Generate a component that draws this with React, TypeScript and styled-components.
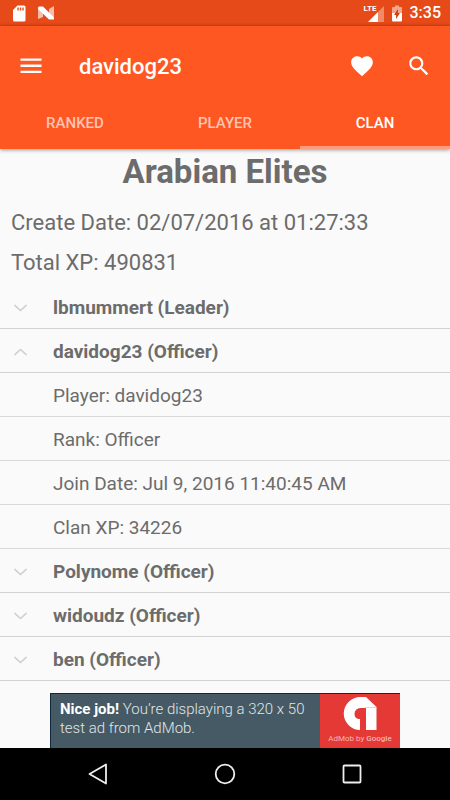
import React, { useState } from "react";
import styled, { createGlobalStyle } from "styled-components";

const GlobalStyle = createGlobalStyle`
  *, *::before, *::after { box-sizing: border-box; }
  body { margin: 0; background: #fafafa; font-family: Roboto, "Noto Sans", sans-serif; }
  button { font-family: inherit; border: 0; padding: 0; background: none; cursor: pointer; }
  h1, h2, p, ul { margin: 0; padding: 0; }
  svg { display: block; flex: none; }
`;

const Screen = styled.div`
  display: flex;
  flex-direction: column;
  height: 100vh;
  color: #6c6c6c;
`;

const StatusBar = styled.div`
  display: flex;
  align-items: center;
  justify-content: space-between;
  flex: none;
  height: 26px;
  padding: 0 9px 0 12px;
  background: linear-gradient(#e64a19 23px, #d84617);
  color: #fff;
`;

const StatusGroup = styled.div<{ $gap: number }>`
  display: flex;
  align-items: center;
  gap: ${(p) => p.$gap}px;
`;

const Network = styled.div`
  position: relative;
  padding-left: 4px;
`;

const NetworkType = styled.span`
  position: absolute;
  left: 0;
  top: 0;
  font-size: 8px;
  line-height: 8px;
  font-weight: 700;
`;

const Clock = styled.time`
  font-size: 16px;
  line-height: 26px;
  font-weight: 500;
`;

const Header = styled.header`
  position: relative;
  flex: none;
  background: #ff5722;
  color: #fff;
  box-shadow: 0 1px 4px rgba(0, 0, 0, 0.4);
`;

const Toolbar = styled.div`
  display: flex;
  align-items: center;
  height: 79px;
  padding: 0 18px;
`;

const IconButton = styled.button`
  display: grid;
  place-items: center;
  width: 26px;
  height: 40px;
  color: #fff;
`;

const ToolbarTitle = styled.h1`
  flex: 1;
  padding: 2px 0 0 35px;
  font-size: 22px;
  line-height: 28px;
  font-weight: 500;
`;

const Actions = styled.div`
  display: flex;
  gap: 31px;
`;

const Tabs = styled.div`
  display: grid;
  grid-template-columns: repeat(3, 1fr);
`;

const Tab = styled.button<{ $active: boolean }>`
  height: 44px;
  padding-bottom: 5px;
  border-bottom: 3px solid ${(p) => (p.$active ? "#ff9c7d" : "transparent")};
  color: ${(p) => (p.$active ? "#fff" : "#ffc4b2")};
  font-size: 15px;
  line-height: 20px;
  font-weight: 500;
`;

const Content = styled.main`
  flex: 1;
  min-height: 0;
  overflow: hidden;
`;

const ClanName = styled.h2`
  padding-top: 3px;
  text-align: center;
  font-size: 33px;
  line-height: 40px;
  font-weight: 700;
`;

const Facts = styled.div`
  padding: 11px 0 2px;
`;

const Fact = styled.p`
  padding: 0 11px;
  font-size: 22px;
  line-height: 40px;
`;

const List = styled.ul`
  list-style: none;
`;

const MemberRow = styled.button`
  display: flex;
  align-items: center;
  width: 100%;
  height: 44px;
  padding: 2px 0 0 14px;
  gap: 26px;
  border-bottom: 1px solid #d2d2d2;
  color: #6c6c6c;
  font-size: 19px;
  line-height: 24px;
  font-weight: 700;
  text-align: left;
`;

const DetailRow = styled.li`
  height: 44px;
  padding: 11px 0 0 53px;
  border-bottom: 1px solid #d9d9d9;
  font-size: 19px;
  line-height: 24px;
`;

const AdSlot = styled.aside`
  display: flex;
  justify-content: center;
  flex: none;
  padding: 0 50px;
`;

const Ad = styled.a`
  display: flex;
  width: 100%;
  max-width: 350px;
  height: 55px;
  border: 1px solid #10283a;
  border-width: 1px 0 0 1px;
  background: #455a64;
  color: #e0e6e9;
  text-decoration: none;
`;

const AdText = styled.p`
  flex: 1;
  padding: 6px 0 0 9px;
  font-size: 15px;
  line-height: 19px;
  font-weight: 300;
  strong { color: #fff; font-weight: 700; }
`;

const AdBrand = styled.div`
  display: flex;
  flex-direction: column;
  align-items: center;
  flex: none;
  width: 80px;
  padding-top: 3px;
  background: #e53935;
  color: #f8b5b3;
  font-size: 8px;
  line-height: 16px;
  white-space: nowrap;
  b { font-weight: 500; }
`;

const NavBar = styled.nav`
  display: flex;
  align-items: center;
  justify-content: center;
  gap: 101px;
  flex: none;
  height: 52px;
  background: #000;
`;

const Chevron = ({ open }: { open: boolean }) => (
  <svg width="13" height="8" viewBox="0 0 13 8" fill="none" stroke="#cfcfcf" strokeWidth="1.6" aria-hidden="true">
    <path d={open ? "M.5 7 6.5 1.5 12.5 7" : "M.5 1 6.5 6.5 12.5 1"} />
  </svg>
);

const AdMobLogo = () => (
  <svg width="34" height="34" viewBox="0 0 34 34" aria-hidden="true">
    <path
      fill="#fff"
      d="M17.5 0H23L33.5 10V33H23V11H17.5A5.8 5.8 0 0 0 11.5 17C11.500 20 13.500 22 17 22V33A16.5 16.5 0 0 1 17.500 0Z"
    />
    <path fill="#d9d9d9" d="M22 10H33V11H22Z" />
  </svg>
);

interface Member {
  name: string;
  rank: string;
  details: string[];
}

const members: Member[] = [
  { name: "lbmummert", rank: "Leader", details: [] },
  {
    name: "davidog23",
    rank: "Officer",
    details: [
      "Player: davidog23",
      "Rank: Officer",
      "Join Date: Jul 9, 2016 11:40:45 AM",
      "Clan XP: 34226",
    ],
  },
  { name: "Polynome", rank: "Officer", details: [] },
  { name: "widoudz", rank: "Officer", details: [] },
  { name: "ben", rank: "Officer", details: [] },
];

export default function App() {
  const [tab, setTab] = useState("CLAN");
  const [expanded, setExpanded] = useState("davidog23");

  return (
    <>
      <GlobalStyle />
      <Screen>
        <StatusBar>
          <StatusGroup $gap={12}>
            <svg width="14" height="17" viewBox="0 0 14 17" aria-hidden="true">
              <path fill="#fff" d="M5.5.5H12A1.5 1.5 0 0 1 13.5 2V15A1.5 1.5 0 0 1 12 16.5H2.5A1.5 1.5 0 0 1 1 15V5Z" />
              <path stroke="#e64a19" strokeWidth="1.4" d="M6 2.5V5.5M8.5 2.5V5.5M11 2.5V5.5" />
            </svg>
            <svg width="16" height="14" viewBox="0 0 16 14" aria-hidden="true">
              <path fill="#f7bda9" d="M0 1 5 4V11L0 13ZM16 0V12L11 9V3Z" />
              <path fill="#fff" d="M1 .5H5L16 11.5V13.5H11L0 3V1.5Z" />
            </svg>
          </StatusGroup>
          <StatusGroup $gap={7}>
            <Network>
              <svg width="16" height="17" viewBox="0 0 16 17" aria-hidden="true">
                <path fill="#f08b6a" d="M16 1V17H0L10 7Z" />
                <path fill="#fff" d="M10 7V17H0Z" />
              </svg>
              <NetworkType>LTE</NetworkType>
            </Network>
            <svg width="12" height="17" viewBox="0 0 12 17" aria-hidden="true">
              <path fill="#f2a78f" d="M4 .5H8V2H10A1 1 0 0 1 11 3V9H1V3A1 1 0 0 1 2 2H4Z" />
              <path fill="#fff" d="M1 8H11V15.5A1 1 0 0 1 10 16.5H2A1 1 0 0 1 1 15.5Z" />
              <path fill="#d83f10" d="M7 4V8H9L5 14V10H3Z" />
            </svg>
            <Clock>3:35</Clock>
          </StatusGroup>
        </StatusBar>
        <Header>
          <Toolbar>
            <IconButton aria-label="Menu">
              <svg width="22" height="16" viewBox="0 0 22 16" fill="#fff">
                <path d="M.5.5H21.5V2.8H.5ZM.5 6.600H21.500V8.900H.5ZM.5 12.700H21.500V15H.5Z" />
              </svg>
            </IconButton>
            <ToolbarTitle>davidog23</ToolbarTitle>
            <Actions>
              <IconButton aria-label="Favourite">
                <svg width="26" height="26" viewBox="0 0 24 24" fill="#fff">
                  <path d="M12 21.350l-1.450-1.320C5.400 15.360 2 12.280 2 8.500 2 5.420 4.420 3 7.500 3c1.740 0 3.410.810 4.500 2.090C13.090 3.810 14.760 3 16.500 3 19.580 3 22 5.420 22 8.500c0 3.780-3.400 6.860-8.550 11.540L12 21.350z" />
                </svg>
              </IconButton>
              <IconButton aria-label="Search">
                <svg width="26" height="26" viewBox="0 0 24 24" fill="#fff">
                  <path d="M15.500 14h-.790l-.280-.270C15.410 12.590 16 11.110 16 9.500 16 5.910 13.090 3 9.500 3S3 5.910 3 9.500 5.910 16 9.500 16c1.610 0 3.090-.590 4.230-1.570l.270.280v.790l5 4.990L20.490 19l-4.990-5zm-6 0C7.010 14 5 11.990 5 9.500S7.010 5 9.500 5 14 7.010 14 9.500 11.990 14 9.500 14z" />
                </svg>
              </IconButton>
            </Actions>
          </Toolbar>
          <Tabs role="tablist">
            {["RANKED", "PLAYER", "CLAN"].map((name) => (
              <Tab key={name} role="tab" aria-selected={tab === name} $active={tab === name} onClick={() => setTab(name)}>
                {name}
              </Tab>
            ))}
          </Tabs>
        </Header>
        <Content>
          <ClanName>Arabian Elites</ClanName>
          <Facts>
            <Fact>Create Date: 02/07/2016 at 01:27:33</Fact>
            <Fact>Total XP: 490831</Fact>
          </Facts>
          <List>
            {members.map((m) => {
              const open = expanded === m.name;
              return (
                <li key={m.name}>
                  <MemberRow aria-expanded={open} onClick={() => setExpanded(open ? "" : m.name)}>
                    <Chevron open={open} />
                    {m.name} ({m.rank})
                  </MemberRow>
                  {open && (
                    <List>
                      {m.details.map((d) => (
                        <DetailRow key={d}>{d}</DetailRow>
                      ))}
                    </List>
                  )}
                </li>
              );
            })}
          </List>
        </Content>
        <AdSlot>
          <Ad href="#admob">
            <AdText>
              <strong>Nice job!</strong> You’re displaying a 320 x 50 test ad from AdMob.
            </AdText>
            <AdBrand>
              <AdMobLogo />
              <span>AdMob by <b>Google</b></span>
            </AdBrand>
          </Ad>
        </AdSlot>
        <NavBar aria-label="System">
          <IconButton aria-label="Back">
            <svg width="20" height="22" viewBox="0 0 20 22" fill="none" stroke="#eee" strokeWidth="1.8" strokeLinejoin="round">
              <path d="M18 1.5V20.5L1.5 11Z" />
            </svg>
          </IconButton>
          <IconButton aria-label="Home">
            <svg width="22" height="22" viewBox="0 0 22 22" fill="none" stroke="#eee" strokeWidth="1.8">
              <circle cx="11" cy="11" r="9.3" />
            </svg>
          </IconButton>
          <IconButton aria-label="Recent apps">
            <svg width="20" height="20" viewBox="0 0 20 20" fill="none" stroke="#eee" strokeWidth="1.8">
              <rect x="1.5" y="1.5" width="17" height="17" rx="1" />
            </svg>
          </IconButton>
        </NavBar>
      </Screen>
    </>
  );
}
